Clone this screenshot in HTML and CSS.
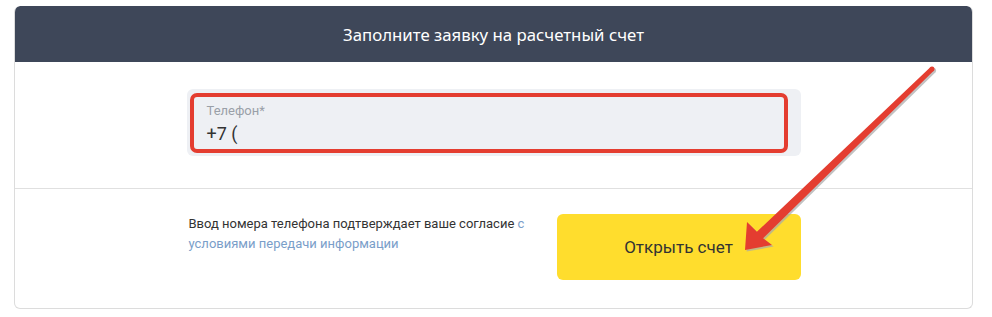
FILE: index.html
```html
<!DOCTYPE html>
<html lang="ru">
<head>
<meta charset="utf-8">
<link rel="stylesheet" href="styles.css">
</head>
<body>
<div class="card">
  <div class="card-header">Заполните заявку на расчетный счет</div>
  <div class="card-body">
    <div class="field">
      <div class="field-label">Телефон*</div>
      <div class="field-value">+7 (</div>
      <div class="highlight"></div>
    </div>
  </div>
  <div class="card-footer">
    <div class="footer-inner">
      <p class="consent">Ввод номера телефона подтверждает ваше согласие <a href="#" class="link">с условиями передачи информации</a></p>
      <button class="btn">Открыть счет</button>
    </div>
  </div>
</div>
<svg class="arrow" width="992" height="317" viewBox="0 0 992 317">
  <g transform="translate(1.6 1.6)" fill="#a9a9a9" opacity="0.7">
    <polygon points="930.3,67.2 756.9,231.8 747,222 745,250 772,245 763.1,238.2 933.7,70.8"/>
    <circle cx="932" cy="69" r="2.5"/>
  </g>
  <g fill="#e43d30">
    <polygon points="930.3,67.2 756.9,231.8 747,222 745,250 772,245 763.1,238.2 933.7,70.8"/>
    <circle cx="932" cy="69" r="2.5"/>
  </g>
</svg>
</body>
</html>
```
FILE: styles.css
```css
html, body {
  margin: 0;
  padding: 0;
  background: #fff;
}
body {
  padding: 6px 19px 0 14px;
  font-family: Roboto, "Liberation Sans", sans-serif;
}
.card {
  width: 959px;
  box-sizing: border-box;
  border: 1px solid #dcdcdc;
  border-top: none;
  border-radius: 6px;
  overflow: hidden;
}
.card-header {
  height: 56px;
  margin: 0 -1px;
  background: #3e4759;
  color: #fff;
  font-family: "Noto Sans", "Open Sans", sans-serif;
  font-size: 16.8px;
  display: flex;
  align-items: center;
  justify-content: center;
  border-radius: 6px 6px 0 0;
}
.card-body {
  display: flex;
  justify-content: center;
  padding: 27px 0 32px;
  border-bottom: 1px solid #e0e0e0;
}
.field {
  position: relative;
  width: 614px;
  height: 67px;
  box-sizing: border-box;
  background: #eef0f4;
  border-radius: 6px;
  padding: 14px 20px 0;
}
.field-label {
  font-size: 13px;
  line-height: 16px;
  color: #9aa0a8;
}
.field-value {
  font-size: 18px;
  line-height: 24px;
  color: #333;
  margin-top: 3px;
}
.highlight {
  position: absolute;
  left: 3px;
  top: 4px;
  width: 598px;
  height: 60px;
  box-sizing: border-box;
  border: 4px solid #e43d30;
  border-radius: 7px;
}
.card-footer {
  display: flex;
  justify-content: center;
  padding: 25px 0 28px;
}
.footer-inner {
  width: 614px;
  display: flex;
  justify-content: space-between;
  align-items: flex-start;
}
.consent {
  margin: 0 0 0 2px;
  width: 340px;
  font-size: 13px;
  line-height: 20px;
  color: #333;
}
.link {
  color: #7a9ec9;
  text-decoration: none;
}
.btn {
  width: 244px;
  height: 66px;
  border: none;
  border-radius: 6px;
  background: #ffdd2d;
  color: #333;
  font-family: Roboto, "Liberation Sans", sans-serif;
  font-size: 17px;
  padding: 0;
}
.arrow {
  position: absolute;
  left: 0;
  top: 0;
  pointer-events: none;
}
```
